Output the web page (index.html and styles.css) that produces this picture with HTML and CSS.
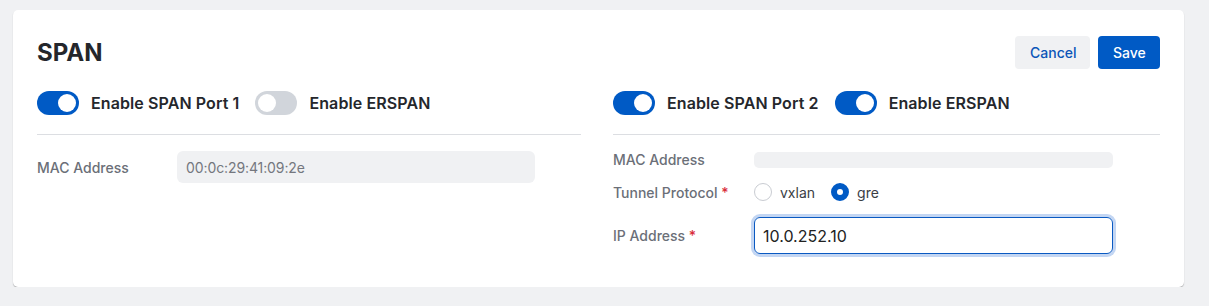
FILE: index.html
```html
<!DOCTYPE html>
<html lang="en">
<head>
  <meta charset="UTF-8" />
  <title>SPAN</title>
  <link rel="stylesheet" href="styles.css">
</head>
<body>
  <div class="card">
    <div class="card-header">
      <h2>SPAN</h2>
      <div class="actions">
        <button class="btn btn-light">Cancel</button>
        <button class="btn btn-primary">Save</button>
      </div>
    </div>

    <div class="columns">
      <!-- Port 1 -->
      <div class="column column-left">
        <div class="toggles">
          <label class="toggle"><span class="switch on"></span>Enable SPAN Port 1</label>
          <label class="toggle"><span class="switch"></span>Enable ERSPAN</label>
        </div>
        <div class="fields">
          <div class="row">
            <span class="label">MAC Address</span>
            <div class="input readonly">00:0c:29:41:09:2e</div>
          </div>
        </div>
      </div>

      <!-- Port 2 -->
      <div class="column column-right">
        <div class="toggles">
          <label class="toggle"><span class="switch on"></span>Enable SPAN Port 2</label>
          <label class="toggle"><span class="switch on"></span>Enable ERSPAN</label>
        </div>
        <div class="fields">
          <div class="row row-short">
            <span class="label">MAC Address</span>
            <div class="input readonly empty"></div>
          </div>
          <div class="row row-radio">
            <span class="label">Tunnel Protocol <em>*</em></span>
            <div class="radios">
              <label class="radio"><span class="dot"></span>vxlan</label>
              <label class="radio"><span class="dot checked"></span>gre</label>
            </div>
          </div>
          <div class="row row-ip">
            <span class="label">IP Address <em>*</em></span>
            <div class="input focused">10.0.252.10</div>
          </div>
        </div>
      </div>
    </div>
  </div>
</body>
</html>
```

FILE: styles.css
```css
body {
  margin: 0;
  padding: 10px 0 0 13px;
  background: #f0f1f3;
  font-family: Inter, "Noto Sans", sans-serif;
  color: #1f2328;
}

.card {
  width: 1123px;
  height: 245px;
  padding: 26px 24px 6px 24px;
  background: #fff;
  border-radius: 5px;
  box-shadow: 0 1px 1px rgba(0, 0, 0, 0.28);
}

.card-header {
  display: flex;
  align-items: center;
  justify-content: space-between;
  height: 33px;
}

.card-header h2 {
  margin: 0;
  font-size: 24px;
  font-weight: 700;
  color: #24262b;
}

.actions {
  display: flex;
  gap: 8px;
}

.btn {
  height: 33px;
  padding: 0 15px;
  border: none;
  border-radius: 4px;
  font-family: inherit;
  font-size: 14px;
  font-weight: 500;
  cursor: pointer;
}

.btn-light {
  width: 75px;
  background: #f0f1f3;
  color: #0c55b8;
}

.btn-primary {
  width: 62px;
  background: #005ac5;
  color: #fff;
}

.columns {
  display: flex;
  gap: 32px;
  margin-top: 22px;
}

.column {
  flex: 1;
}

.column-left {
  flex: 0 0 544px;
}

.toggles {
  display: flex;
  gap: 16px;
  height: 24px;
  padding-bottom: 19px;
  border-bottom: 1px solid #dcdee2;
}

.toggle {
  display: flex;
  align-items: center;
  gap: 12px;
  font-size: 16px;
  font-weight: 600;
  letter-spacing: 0.1px;
  color: #25272c;
}

.switch {
  position: relative;
  width: 42px;
  height: 24px;
  border-radius: 12px;
  background: #d1d5db;
}

.switch::after {
  content: "";
  position: absolute;
  top: 3px;
  left: 3px;
  width: 18px;
  height: 18px;
  border-radius: 50%;
  background: #fff;
}

.switch.on {
  background: #005ac5;
}

.switch.on::after {
  left: 21px;
}

.fields {
  padding-top: 16px;
}

.row {
  display: flex;
  align-items: center;
}

.label {
  width: 140px;
  flex-shrink: 0;
  font-size: 14px;
  font-weight: 500;
  color: #6b6f78;
}

.column-right .label {
  width: 141px;
}

.label em {
  font-style: normal;
  color: #d92d3a;
}

.input {
  box-sizing: border-box;
  width: 358px;
  height: 32px;
  padding: 0 9px;
  border-radius: 6px;
  display: flex;
  align-items: center;
  font-size: 14px;
}

.column-right .input {
  width: 359px;
}

.readonly {
  background: #f0f1f3;
  color: #74777e;
  letter-spacing: -0.1px;
}

.row-short .input {
  height: 16px;
  border-radius: 5px;
}

.row-radio {
  margin-top: 15px;
  height: 18px;
}

.row-ip {
  margin-top: 16px;
}

.focused {
  height: 37px;
  border: 1px solid #0a5ac2;
  box-shadow: 0 0 0 3px #c3d6f3;
  font-size: 16px;
  color: #222;
  padding-left: 8px;
}

.radios {
  display: flex;
  gap: 16px;
}

.radio {
  display: flex;
  align-items: center;
  gap: 8px;
  font-size: 14px;
  color: #3b3e45;
}

.dot {
  box-sizing: border-box;
  width: 18px;
  height: 18px;
  border-radius: 50%;
  border: 1.5px solid #c9ccd2;
  background: #fff;
}

.dot.checked {
  border: 6px solid #005ac5;
}
```
